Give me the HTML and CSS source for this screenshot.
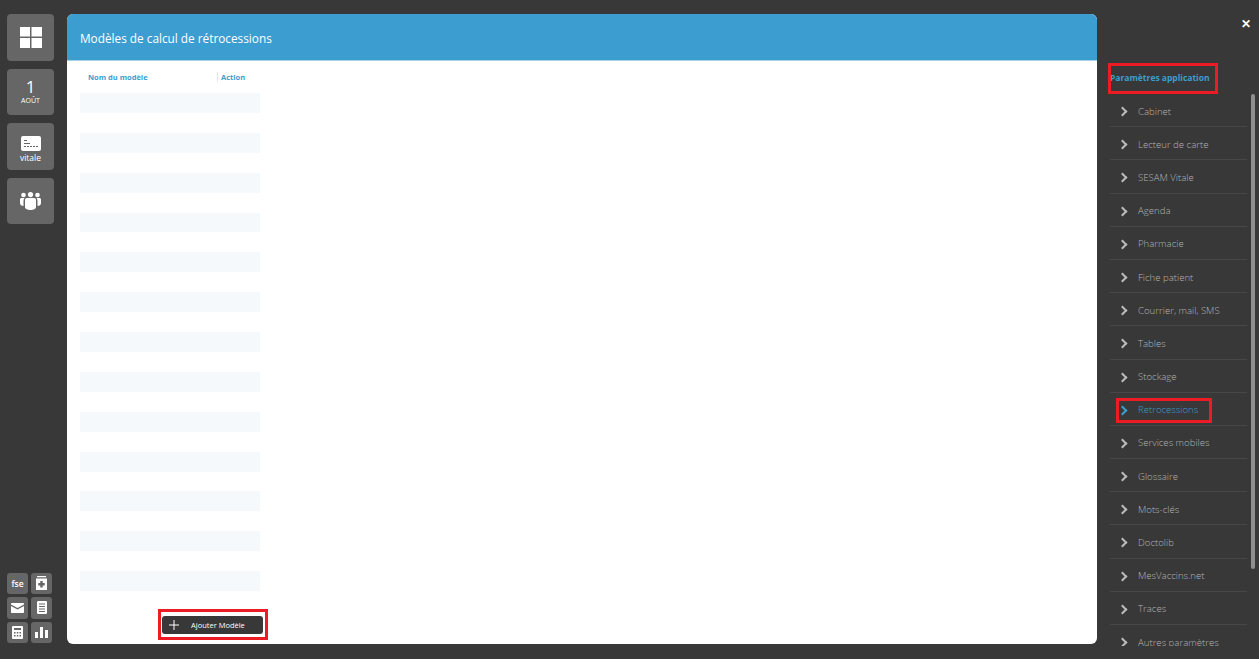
FILE: index.html
```html
<!DOCTYPE html>
<html lang="fr">
<head>
  <meta charset="UTF-8">
  <title>Modèles de calcul de rétrocessions</title>
  <link rel="stylesheet" href="styles.css">
</head>
<body>
  <aside class="sidebar">
    <div class="tiles">
      <div class="tile">
        <svg class="tile-icon" width="22" height="21" viewBox="0 0 22 21"><path fill="#fff" d="M0 0h10v9.500H0zM11.500 0H22v9.500H11.500zM0 11h10v10H0zM11.500 11H22v10H11.500z"/></svg>
      </div>
      <div class="tile tile-date">
        <span class="date-day">1</span>
        <span class="date-month">AOÛT</span>
      </div>
      <div class="tile tile-vitale">
        <svg width="20" height="15" viewBox="0 0 20 15"><rect width="20" height="15" rx="2" fill="#fff"/><path fill="#666" d="M3 4h3v1H3zM3 7h6v1H3zM3 10h2v1H3zM6 10h2v1H6zM9 10h2v1H9zM12 10h2v1h-2zM15 10h2v1h-2z"/></svg>
        <span class="tile-label">vitale</span>
      </div>
      <div class="tile">
        <svg width="21" height="18" viewBox="0 0 21 18"><g fill="#fff"><circle cx="3.500" cy="3" r="2.300"/><circle cx="10.500" cy="2.600" r="2.600"/><circle cx="17.500" cy="3" r="2.300"/><path d="M0 7.500C0 6.500.8 6 1.500 6H4.500C3.800 7 3.500 8 3.500 9v5C1.500 14 0 13 0 11zM21 7.500C21 6.500 20.200 6 19.500 6H16.500C17.200 7 17.500 8 17.500 9v5c2 0 3.500-1 3.500-3zM5 8c0-1.200.8-2 2-2h7c1.200 0 2 .8 2 2v7c0 1.800-2.500 3-5.500 3S5 16.800 5 15z"/></g></svg>
      </div>
    </div>
    <div class="mini-tiles">
      <div class="mini-tile mini-text">fse</div>
      <div class="mini-tile">
        <svg width="11" height="14" viewBox="0 0 11 14"><path fill="#fff" d="M1 0h9v1.300H1zM0 2.500h11V14H0z"/><path fill="#666" d="M4.300 5h2.400v2h2v2.400h-2v2H4.300v-2h-2V7h2z"/></svg>
      </div>
      <div class="mini-tile">
        <svg width="13" height="10" viewBox="0 0 13 10"><path fill="#fff" d="M1 0h11c.6 0 1 .4 1 1v.6L6.500 5 0 1.600V1c0-.6.4-1 1-1zM0 3l6.500 3.400L13 3v6c0 .6-.4 1-1 1H1c-.6 0-1-.4-1-1z"/></svg>
      </div>
      <div class="mini-tile">
        <svg width="10" height="13" viewBox="0 0 10 13"><rect width="10" height="13" rx="1" fill="#fff"/><path fill="#666" d="M2 2.500h6v1H2zM2 5h6v1H2zM2 7.500h6v1H2zM2 10h6v1H2z"/></svg>
      </div>
      <div class="mini-tile">
        <svg width="11" height="13" viewBox="0 0 11 13"><rect width="11" height="13" rx="1" fill="#fff"/><path fill="#666" d="M2 2h7v2H2zM2 6h1.500v1.500H2zM4.800 6h1.500v1.500H4.800zM7.500 6H9v1.500H7.500zM2 9h1.500v1.500H2zM4.800 9h1.500v1.500H4.800zM7.500 9H9v1.500H7.500z"/></svg>
      </div>
      <div class="mini-tile">
        <svg width="13" height="11" viewBox="0 0 13 11"><path fill="#fff" d="M0 5h3v6H0zM5 0h3v11H5zM10 3h3v8h-3z"/></svg>
      </div>
    </div>
  </aside>

  <main class="panel">
    <header class="panel-header">Modèles de calcul de rétrocessions</header>
    <div class="panel-body">
      <div class="models">
        <div class="models-head">
          <span class="col-name">Nom du modèle</span>
          <span class="col-action">Action</span>
        </div>
        <div class="models-rows">
          <div class="row"></div><div class="row row-even"></div>
          <div class="row"></div><div class="row row-even"></div>
          <div class="row"></div><div class="row row-even"></div>
          <div class="row"></div><div class="row row-even"></div>
          <div class="row"></div><div class="row row-even"></div>
          <div class="row"></div><div class="row row-even"></div>
          <div class="row"></div><div class="row row-even"></div>
          <div class="row"></div><div class="row row-even"></div>
          <div class="row"></div><div class="row row-even"></div>
          <div class="row"></div><div class="row row-even"></div>
          <div class="row"></div><div class="row row-even"></div>
          <div class="row"></div><div class="row row-even"></div>
          <div class="row"></div>
        </div>
        <div class="add-line">
          <button class="add-button">
            <svg width="10" height="10" viewBox="0 0 10 10"><path fill="#fff" d="M4.500 0h1v4.500H10v1H5.500V10h-1V5.500H0v-1h4.500z"/></svg>
            <span>Ajouter Modèle</span>
            <i class="mark mark-add"></i>
          </button>
        </div>
      </div>
    </div>
  </main>

  <nav class="settings">
    <div class="close-line"><span class="close">✕</span></div>
    <h2 class="settings-title">Paramètres application<i class="mark mark-title"></i></h2>
    <div class="settings-scroll">
      <ul class="menu">
        <li class="menu-item"><span class="chev"></span>Cabinet</li>
        <li class="menu-item"><span class="chev"></span>Lecteur de carte</li>
        <li class="menu-item"><span class="chev"></span>SESAM Vitale</li>
        <li class="menu-item"><span class="chev"></span>Agenda</li>
        <li class="menu-item"><span class="chev"></span>Pharmacie</li>
        <li class="menu-item"><span class="chev"></span>Fiche patient</li>
        <li class="menu-item"><span class="chev"></span>Courrier, mail, SMS</li>
        <li class="menu-item"><span class="chev"></span>Tables</li>
        <li class="menu-item"><span class="chev"></span>Stockage</li>
        <li class="menu-item active"><span class="chev"></span>Retrocessions<i class="mark mark-menu"></i></li>
        <li class="menu-item"><span class="chev"></span>Services mobiles</li>
        <li class="menu-item"><span class="chev"></span>Glossaire</li>
        <li class="menu-item"><span class="chev"></span>Mots-clés</li>
        <li class="menu-item"><span class="chev"></span>Doctolib</li>
        <li class="menu-item"><span class="chev"></span>MesVaccins.net</li>
        <li class="menu-item"><span class="chev"></span>Traces</li>
        <li class="menu-item"><span class="chev"></span>Autres paramètres</li>
      </ul>
      <div class="scrollbar"></div>
    </div>
  </nav>
</body>
</html>
```

FILE: styles.css
```css
* {
  box-sizing: border-box;
}

html, body {
  height: 100%;
}

body {
  margin: 0;
  display: flex;
  overflow: hidden;
  background-color: #383838;
  font-family: "Open Sans", "Liberation Sans", sans-serif;
}

/* left column */
.sidebar {
  width: 67px;
  flex: none;
  padding: 14px 13px 16px 7px;
  display: flex;
  flex-direction: column;
  justify-content: space-between;
}

.tiles {
  display: flex;
  flex-direction: column;
  gap: 8px;
}

.tile {
  width: 47px;
  height: 46.500px;
  background-color: #666;
  border-radius: 4px;
  display: flex;
  flex-direction: column;
  align-items: center;
  justify-content: center;
  color: #fff;
}

.date-day {
  font-size: 17px;
  font-weight: 500;
  line-height: 18px;
  margin-top: -1px;
}

.date-month {
  font-size: 7px;
  line-height: 9px;
}

.tile-vitale {
  padding-top: 7px;
  gap: 1px;
}

.tile-label {
  font-size: 8.500px;
  line-height: 11px;
}

.mini-tiles {
  display: grid;
  grid-template-columns: 21px 21px;
  grid-auto-rows: 21.500px;
  gap: 3px;
}

.mini-tile {
  background-color: #666;
  border-radius: 3px;
  display: flex;
  align-items: center;
  justify-content: center;
  color: #fff;
}

.mini-text {
  font-size: 8.500px;
  font-weight: 600;
}

/* main white panel */
.panel {
  width: 1030px;
  flex: none;
  height: 630px;
  margin-top: 14px;
  background-color: #fff;
  border-radius: 6px;
  overflow: hidden;
  display: flex;
  flex-direction: column;
}

.panel-header {
  height: 47px;
  flex: none;
  padding: 2px 13px 0;
  display: flex;
  align-items: center;
  background-color: #3c9dd0;
  border-bottom: 1px solid #a9d2e8;
  color: #fff;
  font-size: 11.800px;
}

.panel-body {
  padding: 0 13px;
}

.models {
  width: 180px;
}

.models-head {
  height: 32px;
  display: flex;
  align-items: center;
  color: #3c9dd0;
  font-size: 7.500px;
  font-weight: 700;
}

.col-name {
  width: 137px;
  padding-left: 8px;
}

.col-action {
  padding-left: 3px;
  border-left: 1px solid #e6e6e6;
  line-height: 10px;
}

.row {
  height: 19.930px;
}

.row:not(.row-even) {
  background-color: #f5f9fc;
}

.add-line {
  padding: 25px 0 0 82px;
  width: 190px;
}

.add-button {
  position: relative;
  width: 101px;
  height: 18px;
  padding: 0 0 0 7px;
  display: flex;
  align-items: center;
  gap: 12px;
  border: none;
  border-radius: 3px;
  background-color: #383838;
  color: #fff;
  font-family: inherit;
  font-size: 7.500px;
}

/* red annotation frames */
.mark {
  position: absolute;
  border: 3px solid #ed1c24;
  pointer-events: none;
}

.mark-add {
  left: -4px;
  top: -7px;
  width: 110px;
  height: 31px;
}

.mark-title {
  left: -2px;
  top: -1px;
  width: 110px;
  height: 31px;
}

.mark-menu {
  left: 6px;
  top: 5px;
  width: 96px;
  height: 25px;
}

/* right column */
.settings {
  flex: 1;
  min-width: 0;
  display: flex;
  flex-direction: column;
  color: #b4b4b4;
}

.close-line {
  height: 64px;
  padding: 11px 8px 0 0;
  text-align: right;
}

.close {
  color: #fff;
  font-size: 12px;
  font-weight: 700;
}

.settings-title {
  position: relative;
  margin: 0 0 0 13px;
  height: 30px;
  padding-top: 7px;
  color: #3c9dd0;
  font-size: 8.500px;
  font-weight: 700;
  line-height: 13px;
  white-space: nowrap;
}

.settings-scroll {
  position: relative;
  height: 552px;
  padding-left: 13px;
  overflow: hidden;
}

.menu {
  list-style: none;
  margin: 0;
  padding: 0;
  width: 137px;
}

.menu-item {
  position: relative;
  height: 33.200px;
  display: flex;
  align-items: center;
  padding: 2px 0 0 28px;
  border-bottom: 1px solid #474747;
  font-size: 9.600px;
  font-weight: 300;
}

.menu-item.active {
  color: #3c9dd0;
}

.chev {
  position: absolute;
  left: 9px;
  top: 14px;
  width: 7px;
  height: 7px;
  border-top: 2px solid #bbb;
  border-right: 2px solid #bbb;
  transform: rotate(45deg);
}

.active .chev {
  border-color: #3c9dd0;
}

.scrollbar {
  position: absolute;
  left: 154px;
  top: 0;
  width: 4px;
  height: 475px;
  border-radius: 2px;
  background-color: #8f8f8f;
}
```
